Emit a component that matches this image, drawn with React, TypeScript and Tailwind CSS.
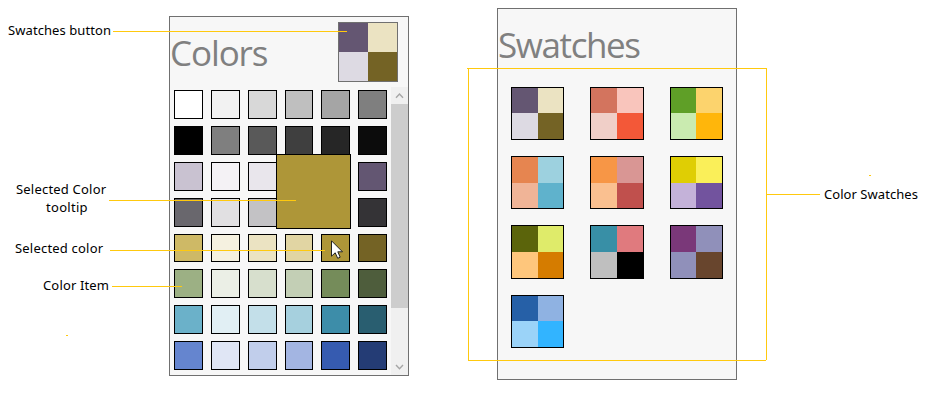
const COLORS = [
  '#ffffff', '#f2f2f2', '#d8d8d8', '#bfbfbf', '#a5a5a5', '#7f7f7f',
  '#000000', '#7f7f7f', '#595959', '#3f3f3f', '#262626', '#0c0c0c',
  '#c9c2d1', '#f4f2f5', '#e9e6ec', '#dfdae3', '#9688a5', '#635672',
  '#69676d', '#e1e0e2', '#c3c2c5', '#a5a3a8', '#4e4d51', '#343336',
  '#ceb966', '#f5f1e0', '#ebe3c2', '#e1d5a3', '#ae9638', '#746325',
  '#9cb084', '#ebefe6', '#d7dfcd', '#c3cfb5', '#758c5a', '#4e5d3c',
  '#6bb1c9', '#e1eff4', '#c3dfe9', '#a6d0de', '#3d8da9', '#295e70',
  '#6585cf', '#e0e6f5', '#c1ceeb', '#a3b5e2', '#365bb0', '#243c75',
];

const SWATCHES = [
  ['#645672', '#ebe3c2', '#dddae3', '#746325'],
  ['#d3745e', '#f9c5bc', '#f0cfc8', '#f35838'],
  ['#5f9f27', '#fcd36d', '#caebb0', '#ffb60b'],
  ['#e68550', '#9dd1df', '#f0b497', '#5fb2cc'],
  ['#f79646', '#d99694', '#fac090', '#c0504d'],
  ['#dfce04', '#faef59', '#c4b2d9', '#72539e'],
  ['#5b640b', '#dfeb6a', '#fec67c', '#d57c00'],
  ['#388fa6', '#e07a7e', '#bfbfbf', '#000000'],
  ['#7a3879', '#9090ba', '#9090ba', '#68452d'],
  ['#2660a7', '#8fb2e2', '#9bd3f8', '#32b4ff'],
];

const COLS = ['grid-cols-[26px_25px]', 'grid-cols-[26px_26px]', 'grid-cols-[25px_26px]'];
const ROWS = [
  'grid-rows-[25px_26px]',
  'grid-rows-[26px_25px]',
  'grid-rows-[26px_26px]',
  'grid-rows-[25px_26px]',
];

// Callout lines that run over the panels.
const LINES = [
  'left-[113px] top-[31px] w-[234px] h-px',
  'left-[109px] top-[200px] w-[187px] h-px',
  'left-[110px] top-[250px] w-[215px] h-px',
  'left-[112px] top-[286px] w-[70px] h-px',
  'left-[66px] top-[335px] w-[2px] h-px',
  'left-[869px] top-[175px] w-[2px] h-px',
  'left-[467px] top-[68px] w-[300px] h-px',
  'left-[468px] top-[360px] w-[298px] h-px',
  'left-[468px] top-[68px] w-px h-[293px]',
  'left-[766px] top-[68px] w-px h-[292px]',
  'left-[767px] top-[194px] w-[53px] h-px',
];

function Swatch({ colors, className }: { colors: string[]; className: string }) {
  return (
    <div className={`grid border ${className}`}>
      {colors.map((c, i) => (
        <div key={i} style={{ backgroundColor: c }} />
      ))}
    </div>
  );
}

function ScrollBar() {
  return (
    <div className="flex h-[288px] w-[17px] flex-col bg-[#f0f0f0]">
      <svg width="17" height="17" viewBox="0 0 17 17" fill="none" stroke="#a6a6a6" strokeWidth="1.4">
        <path d="M5 10.8 8.5 7.1 12 10.8" />
      </svg>
      <div className="h-[204px] bg-[#cdcdcd]" />
      <div className="flex-1" />
      <svg width="17" height="17" viewBox="0 0 17 17" fill="none" stroke="#a6a6a6" strokeWidth="1.4">
        <path d="M5 7 8.5 10.7 12 7" />
      </svg>
    </div>
  );
}

function ColorsPanel() {
  return (
    <section className="mt-4 flex h-[360px] w-[240px] flex-col border border-[#707070] bg-[#f7f7f7]">
      <header className="flex h-[70px] justify-between pr-[10px] pt-[5px]">
        <h1 className="pt-[7px] font-['Open_Sans',sans-serif] text-[35px] leading-[48px] tracking-[-1.1px] text-[#808080]">
          Colors
        </h1>
        <Swatch
          colors={SWATCHES[0]}
          className="size-[60px] grid-cols-[29px_29px] grid-rows-[29px_29px] border-[#707070]"
        />
      </header>
      <div className="flex justify-between">
        <div className="grid auto-rows-[28.8px] grid-cols-[repeat(6,28.8px)] gap-x-2 gap-y-[7px] pl-[4.2px] pt-[3.4px]">
          {COLORS.map((c, i) => (
            <div key={i} className="border border-black" style={{ backgroundColor: c }} />
          ))}
        </div>
        <ScrollBar />
      </div>
    </section>
  );
}

function SwatchesPanel() {
  return (
    <section className="ml-[88px] mt-2 h-[372px] w-[240px] border border-[#707070] bg-[#f7f7f7]">
      <h1 className="h-[78px] pt-[12px] font-['Open_Sans',sans-serif] text-[35px] leading-[48px] tracking-[-1.4px] text-[#808080]">
        Swatches
      </h1>
      <div className="grid grid-cols-[53px_54px_53px] grid-rows-[53px_53px_54px_53px] gap-x-[26px] gap-y-4 pl-[13px]">
        {SWATCHES.map((s, i) => (
          <Swatch key={i} colors={s} className={`border-black ${COLS[i % 3]} ${ROWS[Math.floor(i / 3)]}`} />
        ))}
      </div>
    </section>
  );
}

export default function App() {
  return (
    <main className="relative flex h-[400px] w-[930px] overflow-hidden bg-white font-['Noto_Sans',sans-serif] text-[13px] leading-[18px] tracking-[0.15px] text-black">
      <aside className="flex w-[169px] flex-col whitespace-nowrap pt-[21px]">
        <p className="pl-2 tracking-[0.08px]">Swatches button</p>
        <p className="mt-[141px] pl-4 tracking-[0.2px]">Selected Color</p>
        <p className="pl-[46px] tracking-[0.3px]">tooltip</p>
        <p className="mt-[23px] pl-[15px] tracking-[0.2px]">Selected color</p>
        <p className="mt-[19px] pl-[43px]">Color Item</p>
      </aside>
      <ColorsPanel />
      <SwatchesPanel />
      <p className="ml-[87px] mt-[185px] whitespace-nowrap tracking-[0.05px]">Color Swatches</p>

      <div className="absolute left-[276px] top-[154px] size-[75px] border border-black bg-[#ae9638]" />
      {LINES.map((l) => (
        <div key={l} className={`absolute bg-[#ffc90e] ${l}`} />
      ))}
      <svg className="absolute left-[331px] top-[240px]" width="13" height="20" viewBox="0 0 13 20">
        <path
          d="M.5.8V16.2L4.2 12.8 6.7 18.3 9.2 17.2 6.8 11.8H11.5Z"
          fill="#fff"
          stroke="#222"
          strokeWidth="1"
        />
      </svg>
    </main>
  );
}
